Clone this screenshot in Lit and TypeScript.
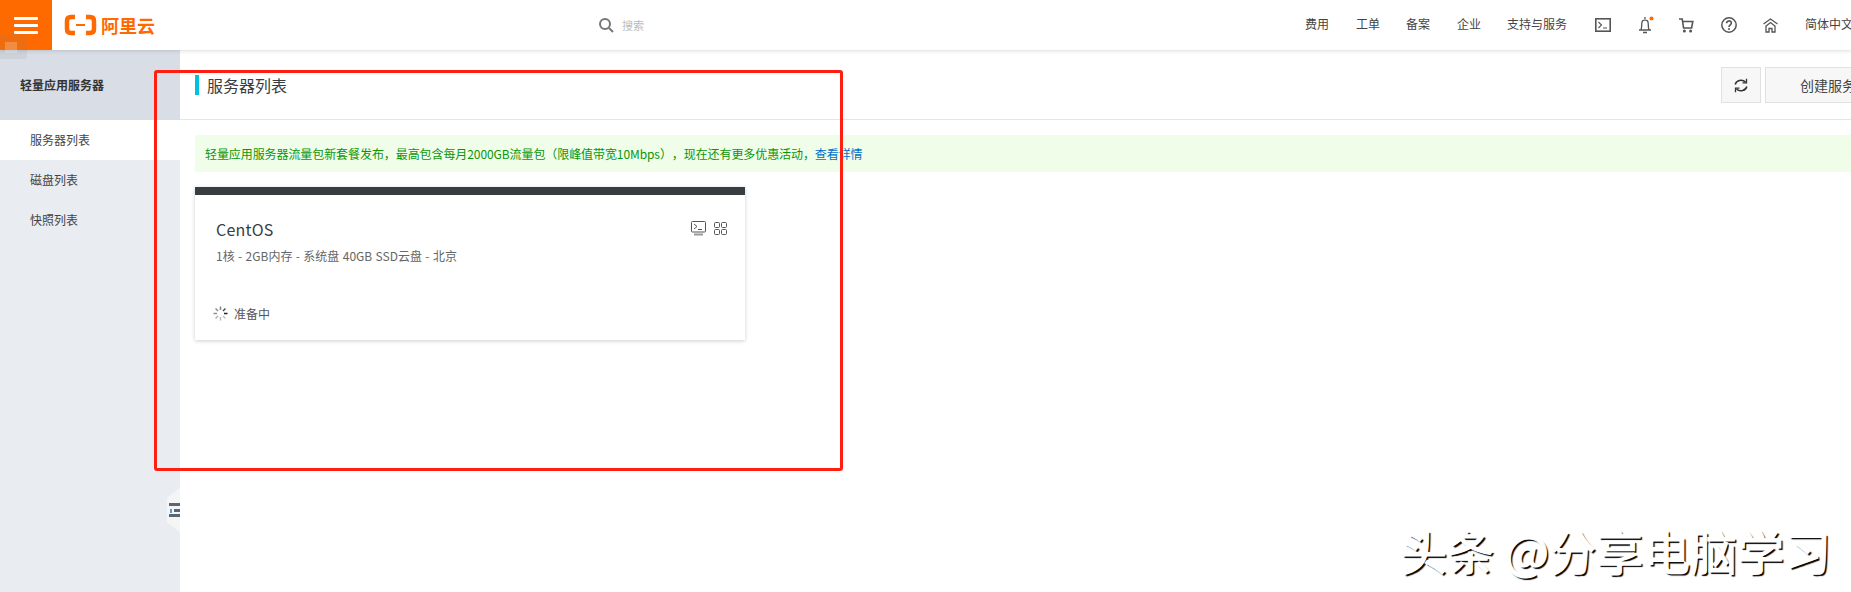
import { LitElement, html, css, svg } from "lit";
import { customElement } from "lit/decorators.js";

const spokes = [
  [0, 0.55], [45, 0.8], [90, 1], [135, 0.25], [180, 0.3], [225, 0.35], [270, 0.5], [315, 0.5],
];

@customElement("app-root")
export class AppRoot extends LitElement {
  static styles = css`
    :host {
      display: block;
      position: relative;
      width: 100%;
      height: 592px;
      overflow: hidden;
      background: #fff;
      font-family: "Noto Sans CJK SC", "Open Sans", sans-serif;
      font-size: 12px;
      color: #333;
      text-spacing-trim: space-all;
    }
    svg { display: block; flex: none; }
    .header {
      position: relative;
      z-index: 2;
      display: flex;
      align-items: center;
      height: 50px;
      background: #fff;
      box-shadow: 0 1px 4px rgba(0, 0, 0, 0.14);
    }
    .burger {
      flex: none;
      width: 52px;
      height: 50px;
      background: #ff6a00;
      display: flex;
      align-items: center;
      justify-content: center;
    }
    .logo {
      flex: none;
      width: 91px;
      margin-left: 12px;
      display: flex;
      align-items: center;
      gap: 4px;
      color: #ff6a00;
      font-size: 18px;
      font-weight: 700;
      line-height: 22px;
      white-space: nowrap;
    }
    .search {
      flex: none;
      width: 707px;
      margin-left: 443px;
      display: flex;
      align-items: center;
      gap: 8px;
      color: #bbb;
      font-size: 11px;
    }
    .nav { flex: none; display: flex; align-items: center; white-space: nowrap; color: #444; }
    .nav span { display: block; margin-top: -3px; }
    .nav .t1 { width: 51px; }
    .nav .t2 { width: 50px; }
    .nav .t3 { width: 51px; }
    .nav .t4 { width: 50px; }
    .nav .t5 { width: 88px; }
    .nav .w43 { width: 43px; }
    .nav .w41 { width: 41px; }
    .nav .w42 { width: 42px; }
    .body { display: flex; height: 542px; }
    .side {
      flex: none;
      width: 180px;
      background: #e9edf2;
      position: relative;
      overflow: hidden;
    }
    .side h3 {
      margin: 0;
      height: 70px;
      box-sizing: border-box;
      padding: 0 0 2px 20px;
      display: flex;
      align-items: center;
      background: #d9dee6;
      font-size: 12px;
      font-weight: 700;
      color: #333;
    }
    .item {
      height: 40px;
      box-sizing: border-box;
      padding: 0 0 2px 30px;
      display: flex;
      align-items: center;
      color: #444;
    }
    .item.on { background: #fff; }
    .handle {
      position: absolute;
      left: 167px;
      top: 435px;
      width: 16px;
      height: 50px;
      background: #f5f5f6;
      clip-path: polygon(0 26%, 100% 0, 100% 100%, 0 74%);
    }
    .handle i { position: absolute; height: 3px; background: #5b6675; left: 2px; right: 0; }
    .handle .b1 { top: 18px; }
    .handle .b2 { top: 24px; left: 7px; }
    .handle .b3 { top: 29px; }
    .handle b { position: absolute; top: 23.5px; left: 3px; width: 2px; height: 4px; background: #4a9fd8; }
    .main { flex: 1; min-width: 0; overflow: hidden; background: #fff; }
    .toolbar {
      height: 70px;
      box-sizing: border-box;
      border-bottom: 1px solid #e3e5e8;
      padding: 17px 0 0 15px;
      display: flex;
      align-items: flex-start;
    }
    .tbar { width: 4px; height: 20px; margin-top: 8px; background: #00c1de; flex: none; }
    .title { margin: 8px 0 0 8px; font-size: 16px; line-height: 20px; color: #373d41; }
    .btns { margin-left: auto; margin-right: -44px; display: flex; gap: 4px; }
    .btn {
      height: 36px;
      box-sizing: border-box;
      background: #f7f7f7;
      border: 1px solid #e1e1e1;
      display: flex;
      align-items: center;
      font-size: 14px;
      color: #444;
    }
    .btn.icon { width: 40px; justify-content: center; }
    .btn.wide { width: 130px; padding-left: 34px; white-space: nowrap; }
    .banner {
      margin: 15px 0 0 15px;
      height: 37px;
      padding: 0 0 1px 10px;
      box-sizing: border-box;
      display: flex;
      align-items: center;
      background: #f0fde9;
      color: #0a960a;
      white-space: nowrap;
      letter-spacing: -0.08px;
    }
    .banner a { color: #0070cc; text-decoration: none; }
    .card {
      margin: 15px 0 0 15px;
      width: 550px;
      height: 153px;
      box-sizing: border-box;
      border-top: 8px solid #373d41;
      box-shadow: 0 1px 4px rgba(0, 0, 0, 0.2);
      padding: 22px 18px 0 21px;
    }
    .row { display: flex; align-items: center; justify-content: space-between; height: 24px; }
    .name { font-size: 16px; line-height: 24px; color: #373d41; letter-spacing: 0.2px; }
    .acts { display: flex; gap: 7px; align-items: center; margin-top: -2px; }
    .spec { margin-top: 6px; line-height: 18px; color: #666; word-spacing: 0.7px; }
    .status { margin: 38px 0 0 -3px; height: 20px; display: flex; align-items: center; gap: 6px; color: #555; }
    .mark {
      position: absolute;
      left: 154px;
      top: 70px;
      width: 689px;
      height: 401px;
      box-sizing: border-box;
      border: 3px solid #ff1f10;
      border-radius: 3px;
      z-index: 3;
    }
    .float {
      position: absolute;
      left: 0;
      top: 34px;
      width: 27px;
      height: 25px;
      border-radius: 0 3px 3px 0;
      background: rgba(120, 120, 120, 0.12);
      z-index: 3;
    }
    .float i { position: absolute; left: 5px; top: 8px; width: 12px; height: 11px; background: rgba(255, 255, 255, 0.22); }
    .water {
      position: absolute;
      left: 1400px;
      top: 520px;
      font-size: 47px;
      line-height: 60px;
      white-space: nowrap;
      color: #fff;
      -webkit-text-stroke: 1.2px #fff;
      text-shadow: 2px 2px 1px #000;
      z-index: 3;
    }
  `;

  render() {
    return html`
      <div class="header">
        <div class="burger">
          <svg width="24" height="17" viewBox="0 0 24 17" fill="#fff">
            <rect width="24" height="3" rx="1" /><rect y="7" width="24" height="3" rx="1" /><rect y="14" width="24" height="3" rx="1" />
          </svg>
        </div>
        <div class="logo">
          <svg width="33" height="22" viewBox="0 0 33 22" fill="none" stroke="#ff6a00">
            <path stroke-width="4.5" d="M11 3H7Q3 3 3 7V15Q3 19 7 19H11" />
            <path stroke-width="4.5" d="M22 3H26Q30 3 30 7V15Q30 19 26 19H22" />
            <path stroke-width="2" d="M12 11H21" />
          </svg>
          <span>阿里云</span>
        </div>
        <div class="search">
          <svg width="16" height="16" viewBox="0 0 16 16" fill="none" stroke="#777" stroke-width="2">
            <circle cx="7" cy="7" r="5" /><path d="M11 11L15 15" />
          </svg>
          <span>搜索</span>
        </div>
        <div class="nav">
          <span class="t1">费用</span><span class="t2">工单</span><span class="t3">备案</span><span class="t4">企业</span><span class="t5">支持与服务</span>
          <div class="w43">
            <svg width="16" height="14" viewBox="0 0 16 14" fill="none" stroke="#555" stroke-width="1.6">
              <rect x="0.8" y="0.8" width="14.4" height="12.4" /><path d="M3.5 4L6.5 7L3.5 10M8 10H12" stroke-width="1.1" />
            </svg>
          </div>
          <div class="w41">
            <svg width="16" height="18" viewBox="0 0 16 18" fill="none" stroke="#555" stroke-width="1.3">
              <path d="M1 14H13M3 14C4 11 3.5 8 4 6C4.5 3.5 9.5 3.5 10 6C10.5 8 10 11 11 14M5 16.5H9M7 1V3" />
              <circle cx="13.5" cy="2.5" r="2" fill="#ff6a00" stroke="none" />
            </svg>
          </div>
          <div class="w42">
            <svg width="15" height="15" viewBox="0 0 15 15" fill="none" stroke="#555" stroke-width="1.6">
              <path d="M0 1H3.2L4.6 10H12.6L13.8 3.5H3.6" />
              <circle cx="5.4" cy="13" r="1.5" fill="#555" stroke="none" /><circle cx="11.6" cy="13" r="1.5" fill="#555" stroke="none" />
            </svg>
          </div>
          <div class="w42">
            <svg width="16" height="16" viewBox="0 0 16 16" fill="none" stroke="#555" stroke-width="1.5">
              <circle cx="8" cy="8" r="7.2" />
              <path d="M5.6 6.2C5.6 3.2 10.4 3.2 10.4 6C10.4 7.8 8 7.8 8 10" stroke-width="1.6" />
              <circle cx="8" cy="12" r="1" fill="#555" stroke="none" />
            </svg>
          </div>
          <div class="w42">
            <svg width="15" height="15" viewBox="0 0 15 15" fill="none" stroke="#555" stroke-width="1.3">
              <path d="M0.5 6L7.5 1L14.5 6M2.5 8.5L7.5 4.5L12.5 8.5M3 8V14H6V10.5H9V14H12V8" />
            </svg>
          </div>
          <span>简体中文</span>
        </div>
      </div>
      <div class="body">
        <div class="side">
          <h3>轻量应用服务器</h3>
          <div class="item on">服务器列表</div>
          <div class="item">磁盘列表</div>
          <div class="item">快照列表</div>
          <div class="handle"><i class="b1"></i><b></b><i class="b2"></i><i class="b3"></i></div>
        </div>
        <div class="main">
          <div class="toolbar">
            <div class="tbar"></div>
            <div class="title">服务器列表</div>
            <div class="btns">
              <div class="btn icon">
                <svg width="14" height="15" viewBox="0 0 14 15" fill="none" stroke="#333" stroke-width="1.5">
                  <path d="M1.2 6.5C2 2.5 8 0.5 11.5 4" /><path d="M12.8 8.5C12 12.5 6 14.5 2.5 11" />
                  <path d="M12.5 0.8V4.8H8.5" stroke-width="1.3" /><path d="M1.5 14.2V10.2H5.5" stroke-width="1.3" />
                </svg>
              </div>
              <div class="btn wide">创建服务器</div>
            </div>
          </div>
          <div class="banner">
            <span>轻量应用服务器流量包新套餐发布，最高包含每月2000GB流量包（限峰值带宽10Mbps），现在还有更多优惠活动，<a>查看详情</a></span>
          </div>
          <div class="card">
            <div class="row">
              <span class="name">CentOS</span>
              <div class="acts">
                <svg width="17" height="15" viewBox="0 0 17 15" fill="none" stroke="#555" stroke-width="1">
                  <rect x="1.5" y="0.5" width="14" height="10.5" rx="1" /><path d="M4 3L7 5.5L4 8M8 8.5H12" />
                  <path d="M4 13.5H13" stroke="#999" stroke-width="2" />
                </svg>
                <svg width="13" height="13" viewBox="0 0 13 13" fill="none" stroke="#555" stroke-width="1">
                  <rect x="0.5" y="0.5" width="5" height="5" rx="1" /><rect x="7.5" y="0.5" width="5" height="5" rx="1" />
                  <rect x="0.5" y="7.5" width="5" height="5" rx="1" /><rect x="7.5" y="7.5" width="5" height="5" rx="1" />
                </svg>
              </div>
            </div>
            <div class="spec">1核 - 2GB内存 - 系统盘 40GB SSD云盘 - 北京</div>
            <div class="status">
              <svg width="15" height="15" viewBox="0 0 15 15" stroke="#222" stroke-width="1.5">
                ${spokes.map(
                  ([a, o]) => svg`<path d="M7.5 0.5V4" opacity=${o} transform="rotate(${a} 7.5 7.5)" />`
                )}
              </svg>
              <span>准备中</span>
            </div>
          </div>
        </div>
      </div>
      <div class="float"><i></i></div>
      <div class="mark"></div>
      <div class="water">头条 @分享电脑学习</div>
    `;
  }
}
